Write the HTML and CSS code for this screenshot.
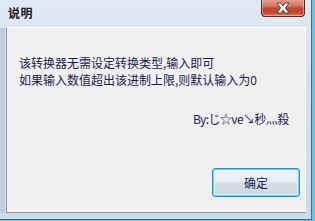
FILE: index.html
```html
<!DOCTYPE html>
<html>
<head>
<meta charset="utf-8">
<link rel="stylesheet" href="styles.css">
</head>
<body>
<div class="window">
  <div class="edge-left"></div>
  <div class="titlebar"><span class="title">说明</span></div>
  <div class="close">
    <svg width="20" height="12" viewBox="0 0 20 12">
      <path d="M4 1 L8 1 L10 4 L12 1 L16 1 L12.5 6 L16 11 L12 11 L10 8 L8 11 L4 11 L7.5 6 Z" fill="#f4f4f4" stroke="#4a4a58" stroke-width="1"/>
    </svg>
  </div>
  <div class="panel">
    <div class="msg">
      <div class="line">该转换器无需设定转换类型,输入即可</div>
      <div class="line">如果输入数值超出该进制上限,则默认输入为0</div>
    </div>
    <div class="sign">By:じ☆ve↘秒灬殺</div>
    <div class="actions"><button class="ok">确定</button></div>
  </div>
</div>
</body>
</html>
```
FILE: styles.css
```css
html, body {
  margin: 0;
  padding: 0;
  width: 315px;
  height: 221px;
  overflow: hidden;
  background: #5cc6e4;
}
.window {
  position: relative;
  width: 312px;
  height: 220px;
  background: linear-gradient(180deg, #e0eaf5 0%, #d3e1ee 40%, #c9dbec 100%);
  border-right: 1px solid #5a6672;
  border-bottom: 1px solid #4a6a78;
  box-sizing: border-box;
  display: flex;
  flex-direction: column;
  font-family: "Noto Sans CJK SC", "Noto Sans", sans-serif;
}
.edge-left {
  position: absolute;
  left: 0;
  top: 28px;
  width: 6px;
  height: 185px;
  background: linear-gradient(90deg, #c6d3df 0, #b8c6d4 3px, #d5e1ec 6px);
}
.titlebar {
  height: 27px;
  flex: none;
  display: flex;
  align-items: center;
  padding-left: 8px;
  box-sizing: border-box;
  padding-bottom: 2px;
}
.title {
  font-size: 12px;
  font-weight: bold;
  color: #1b1b1b;
  letter-spacing: 0.5px;
}
.close {
  position: absolute;
  left: 261px;
  top: -1px;
  width: 44px;
  height: 18px;
  box-sizing: border-box;
  border: 1px solid #5a2a2a;
  border-top: none;
  border-radius: 0 0 4px 4px;
  background: linear-gradient(180deg, #e8a393 0%, #d47766 40%, #c24630 55%, #c8452d 80%, #dc7a5c 100%);
  display: flex;
  align-items: center;
  justify-content: center;
  box-shadow: inset 0 0 0 1px rgba(255,255,255,0.35);
}
.close svg { display: block; }
.panel {
  flex: none;
  margin-left: 6px;
  width: 300px;
  height: 186px;
  box-sizing: border-box;
  background: #f0f0f0;
  border-left: 1px solid #8e98a4;
  border-top: 1px solid #fbfdff;
  border-right: 1px solid #fbfdff;
  border-bottom: 1px solid #8e98a4;
  display: flex;
  flex-direction: column;
  padding: 26px 0 0 12px;
  color: #1c1c50;
  font-size: 12px;
}
.msg .line {
  line-height: 17px;
  height: 17px;
  white-space: nowrap;
}
.sign {
  margin-top: 22px;
  line-height: 17px;
  height: 17px;
  padding-left: 174px;
  white-space: nowrap;
  letter-spacing: -0.6px;
}
.actions {
  flex: none;
  margin-top: 41px;
  display: flex;
  justify-content: flex-end;
  padding-right: 5px;
}
.ok {
  flex: none;
  width: 88px;
  height: 29px;
  box-sizing: border-box;
  border: 1px solid #2e8ecb;
  border-radius: 3px;
  background: linear-gradient(180deg, #eef4f8 0%, #e6edf2 48%, #d4dde4 52%, #cfd9e1 100%);
  box-shadow: inset 0 0 0 1px #6ad0f4, inset 0 0 0 2px #e8f6fc;
  font-family: "Noto Sans CJK SC", sans-serif;
  font-size: 12px;
  color: #1c1c50;
  padding: 0;
}
```
